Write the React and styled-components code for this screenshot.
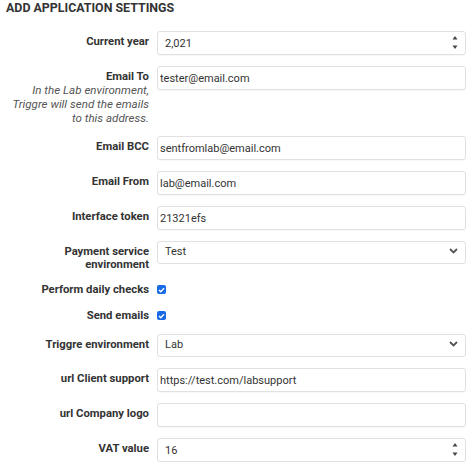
import React from "react";
import styled, { createGlobalStyle } from "styled-components";

const Global = createGlobalStyle`
  html, body { margin: 0; padding: 0; background: #fff; }
  body { font-family: Roboto, "Liberation Sans", Arial, sans-serif; color: #333; }
  * { box-sizing: border-box; }
`;

const Page = styled.div`
  padding: 0 6px 0 6px;
  width: 472px;
`;

const Title = styled.h1`
  margin: 0 0 15px 0;
  font-size: 12.4px;
  line-height: 16px;
  font-weight: 700;
  color: #333;
  text-transform: uppercase;
`;

const Form = styled.div`
  display: flex;
  flex-direction: column;
  gap: 11px;
`;

const Row = styled.div`
  display: grid;
  grid-template-columns: 143px 1fr;
  column-gap: 8px;
  align-items: start;
`;

const LabelCol = styled.div`
  text-align: right;
  padding-top: ${(p) => (p.$check ? "1px" : "4px")};
`;

const Label = styled.label`
  display: block;
  font-size: 11.3px;
  line-height: 13px;
  font-weight: 700;
  color: #333;
`;

const Help = styled.div`
  font-size: 11.6px;
  line-height: 14px;
  font-style: italic;
  color: #555;
`;

const Field = styled.div`
  position: relative;
`;

const Input = styled.input`
  display: block;
  width: 100%;
  height: 24px;
  margin: 0;
  padding: 0 ${(p) => (p.$number ? "7px" : "2px")};
  border: 1px solid #e1e1e1;
  border-radius: 3px;
  box-shadow: 0 1px 1px rgba(0, 0, 0, 0.03);
  font-family: Roboto, "Liberation Sans", Arial, sans-serif;
  font-size: 11px;
  color: #333;
  background: #fff;
  outline: none;
`;

const SelectBox = styled.div`
  height: 23px;
  padding: 0 7px;
  border: 1px solid #e1e1e1;
  border-radius: 3px;
  font-size: 11px;
  line-height: 19px;
  color: #333;
  background: #fff;
`;

const Overlay = styled.span`
  position: absolute;
  right: ${(p) => p.$right}px;
  top: ${(p) => p.$top}px;
  display: flex;
  pointer-events: none;
`;

const CheckWrap = styled.div`
  height: 15px;
  display: flex;
  align-items: center;
`;

const Check = styled.span`
  display: inline-flex;
  align-items: center;
  justify-content: center;
  width: 9px;
  height: 9px;
  border-radius: 2px;
  background: #1769e8;
`;

const Spinner = () => (
  <Overlay $right={8} $top={3}>
    <svg width="6" height="16" viewBox="0 0 6 16">
      <path d="M0.5 5.5 L3 2 L5.5 5.5 Z" fill="#444" />
      <path d="M0.5 11.5 L3 15 L5.5 11.5 Z" fill="#444" />
    </svg>
  </Overlay>
);

const Chevron = () => (
  <Overlay $right={8} $top={7}>
    <svg width="9" height="6" viewBox="0 0 9 6">
      <path d="M1 1 L4.5 4.5 L8 1" fill="none" stroke="#555" strokeWidth="1.8" />
    </svg>
  </Overlay>
);

const TextRow = ({ label, value, help, number }) => (
  <Row>
    <LabelCol>
      <Label>{label}</Label>
      {help && <Help>{help}</Help>}
    </LabelCol>
    <Field>
      <Input type="text" defaultValue={value} readOnly $number={number} />
      {number && <Spinner />}
    </Field>
  </Row>
);

const SelectRow = ({ label, value }) => (
  <Row>
    <LabelCol>
      <Label>{label}</Label>
    </LabelCol>
    <Field>
      <SelectBox>{value}</SelectBox>
      <Chevron />
    </Field>
  </Row>
);

const CheckRow = ({ label }) => (
  <Row>
    <LabelCol $check>
      <Label>{label}</Label>
    </LabelCol>
    <CheckWrap>
      <Check>
        <svg width="7" height="6" viewBox="0 0 7 6">
          <path d="M1 3 L2.8 4.8 L6 1.2" fill="none" stroke="#fff" strokeWidth="1.4" />
        </svg>
      </Check>
    </CheckWrap>
  </Row>
);

export default function App() {
  return (
    <>
      <Global />
      <Page>
        <Title>Add application settings</Title>
        <Form>
          <TextRow label="Current year" value="2,021" number />
          <TextRow
            label="Email To"
            value="tester@email.com"
            help={
              <>
                In the Lab environment,
                <br />
                Triggre will send the emails
                <br />
                to this address.
              </>
            }
          />
          <TextRow label="Email BCC" value="sentfromlab@email.com" />
          <TextRow label="Email From" value="lab@email.com" />
          <TextRow label="Interface token" value="21321efs" />
          <SelectRow
            label={
              <>
                Payment service
                <br />
                environment
              </>
            }
            value="Test"
          />
          <CheckRow label="Perform daily checks" />
          <CheckRow label="Send emails" />
          <SelectRow label="Triggre environment" value="Lab" />
          <TextRow label="url Client support" value="https://test.com/labsupport" />
          <TextRow label="url Company logo" value="" />
          <TextRow label="VAT value" value="16" number />
        </Form>
      </Page>
    </>
  );
}
